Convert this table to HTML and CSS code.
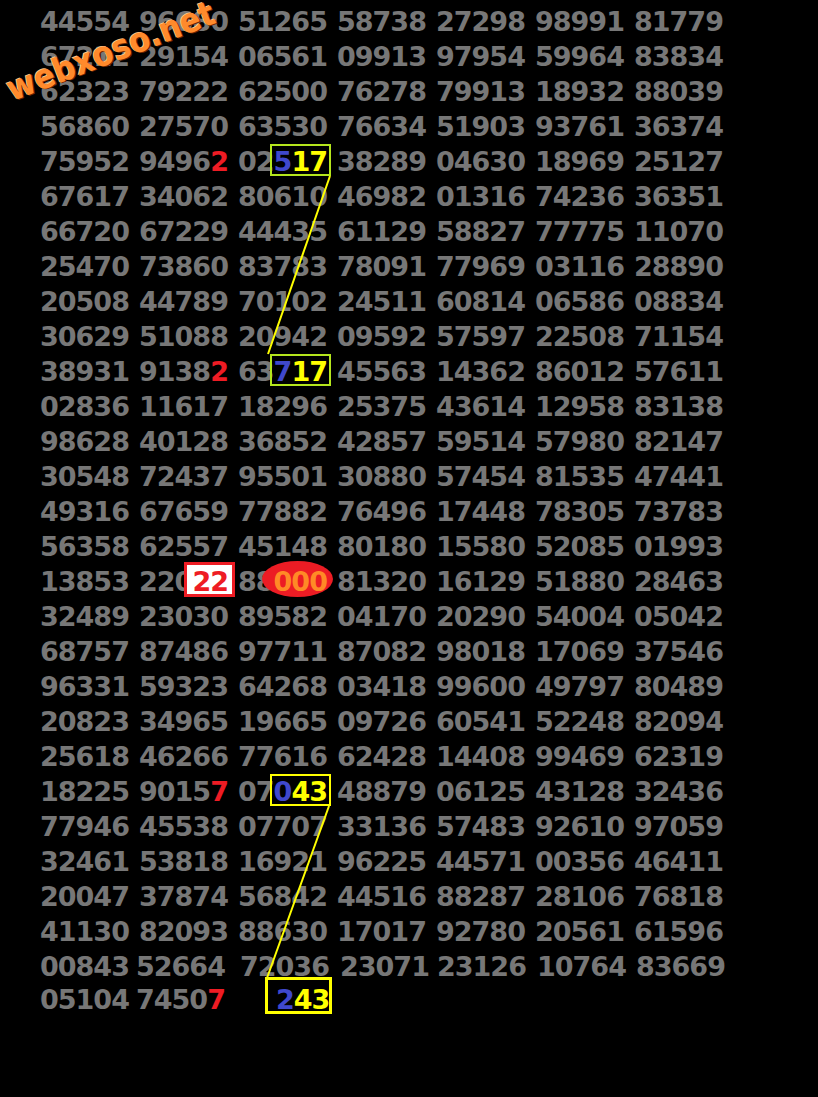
FILE: index.html
```html
<!DOCTYPE html>
<html lang="vi">
<head>
  <meta charset="UTF-8" />
  <meta name="viewport" content="width=device-width, initial-scale=1.0"/>
  <title>Cầu lô</title>
  <link rel="stylesheet" href="styles.css">
</head>
<body>
  <div class="board">
    <div class="row"><span>44554</span><span>96680</span><span>51265</span><span>58738</span><span>27298</span><span>98991</span><span>81779</span></div>
    <div class="row"><span>67212</span><span>29154</span><span>06561</span><span>09913</span><span>97954</span><span>59964</span><span>83834</span></div>
    <div class="row"><span>62323</span><span>79222</span><span>62500</span><span>76278</span><span>79913</span><span>18932</span><span>88039</span></div>
    <div class="row"><span>56860</span><span>27570</span><span>63530</span><span>76634</span><span>51903</span><span>93761</span><span>36374</span></div>
    <div class="row"><span>75952</span><span>9496<b class="red">2</b></span><span>02<b class="box lime"><i class="blue">5</i><i class="yellow">17</i></b></span><span>38289</span><span>04630</span><span>18969</span><span>25127</span></div>
    <div class="row"><span>67617</span><span>34062</span><span>80610</span><span>46982</span><span>01316</span><span>74236</span><span>36351</span></div>
    <div class="row"><span>66720</span><span>67229</span><span>44435</span><span>61129</span><span>58827</span><span>77775</span><span>11070</span></div>
    <div class="row"><span>25470</span><span>73860</span><span>83783</span><span>78091</span><span>77969</span><span>03116</span><span>28890</span></div>
    <div class="row"><span>20508</span><span>44789</span><span>70102</span><span>24511</span><span>60814</span><span>06586</span><span>08834</span></div>
    <div class="row"><span>30629</span><span>51088</span><span>20942</span><span>09592</span><span>57597</span><span>22508</span><span>71154</span></div>
    <div class="row"><span>38931</span><span>9138<b class="red">2</b></span><span>63<b class="box lime"><i class="blue">7</i><i class="yellow">17</i></b></span><span>45563</span><span>14362</span><span>86012</span><span>57611</span></div>
    <div class="row"><span>02836</span><span>11617</span><span>18296</span><span>25375</span><span>43614</span><span>12958</span><span>83138</span></div>
    <div class="row"><span>98628</span><span>40128</span><span>36852</span><span>42857</span><span>59514</span><span>57980</span><span>82147</span></div>
    <div class="row"><span>30548</span><span>72437</span><span>95501</span><span>30880</span><span>57454</span><span>81535</span><span>47441</span></div>
    <div class="row"><span>49316</span><span>67659</span><span>77882</span><span>76496</span><span>17448</span><span>78305</span><span>73783</span></div>
    <div class="row"><span>56358</span><span>62557</span><span>45148</span><span>80180</span><span>15580</span><span>52085</span><span>01993</span></div>
    <div class="row"><span>13853</span><span>220<b class="pair">22</b></span><span>88<b class="oval">000</b></span><span>81320</span><span>16129</span><span>51880</span><span>28463</span></div>
    <div class="row"><span>32489</span><span>23030</span><span>89582</span><span>04170</span><span>20290</span><span>54004</span><span>05042</span></div>
    <div class="row"><span>68757</span><span>87486</span><span>97711</span><span>87082</span><span>98018</span><span>17069</span><span>37546</span></div>
    <div class="row"><span>96331</span><span>59323</span><span>64268</span><span>03418</span><span>99600</span><span>49797</span><span>80489</span></div>
    <div class="row"><span>20823</span><span>34965</span><span>19665</span><span>09726</span><span>60541</span><span>52248</span><span>82094</span></div>
    <div class="row"><span>25618</span><span>46266</span><span>77616</span><span>62428</span><span>14408</span><span>99469</span><span>62319</span></div>
    <div class="row"><span>18225</span><span>9015<b class="red">7</b></span><span>07<b class="box gold"><i class="blue">0</i><i class="yellow">43</i></b></span><span>48879</span><span>06125</span><span>43128</span><span>32436</span></div>
    <div class="row"><span>77946</span><span>45538</span><span>07707</span><span>33136</span><span>57483</span><span>92610</span><span>97059</span></div>
    <div class="row"><span>32461</span><span>53818</span><span>16921</span><span>96225</span><span>44571</span><span>00356</span><span>46411</span></div>
    <div class="row"><span>20047</span><span>37874</span><span>56842</span><span>44516</span><span>88287</span><span>28106</span><span>76818</span></div>
    <div class="row"><span>41130</span><span>82093</span><span>88630</span><span>17017</span><span>92780</span><span>20561</span><span>61596</span></div>
    <div class="row loose"><span>00843</span><span>52664</span><span>72036</span><span>23071</span><span>23126</span><span>10764</span><span>83669</span></div>
    <div class="row last"><span>05104</span><span>7450<b class="red">7</b></span><span class="pending"><b class="box gold tall"><i class="blue">2</i><i class="yellow">43</i></b></span></div>
  </div>

  <svg class="links" width="818" height="1097" viewBox="0 0 818 1097">
    <line x1="330" y1="176" x2="268" y2="354" />
    <line x1="329" y1="806" x2="267" y2="978" />
  </svg>

  <div class="logo">webxoso.net</div>
</body>
</html>
```

FILE: styles.css
```css
body {
  background-color: black;
  margin: 0;
  font-family: 'DejaVu Sans', Verdana, sans-serif;
  position: relative;
  height: 1097px;
  overflow: hidden;
}

.board {
  padding: 4px 0 0 40px;
  font-size: 27px;
  font-weight: bold;
  letter-spacing: -1px;
  color: #777777;
}

.row {
  display: grid;
  grid-template-columns: repeat(7, 99px);
  height: 35px;
  line-height: 35px;
  white-space: nowrap;
}

.row.loose {
  grid-template-columns: 96px 104px 100px 97px 100px 99px 99px;
}

.row.last {
  height: 32px;
  line-height: 32px;
  grid-template-columns: 96px 104px 100px;
}

.pending {
  padding-left: 36px;
}

b, i {
  font-style: normal;
  font-weight: bold;
}

.red { color: #ee1c24; }
.blue { color: #3f48cc; }
.yellow { color: #ffff00; }

.box, .pair, .oval {
  position: relative;
  z-index: 0;
}

.box::before, .pair::before, .oval::before {
  content: '';
  position: absolute;
  box-sizing: border-box;
  z-index: -1;
}

.box::before {
  left: -4px;
  right: -4px;
  top: -2px;
  height: 32px;
  border: 2px solid #ffff00;
}

.box.lime::before {
  border-color: #b5e61d;
}

.box.tall::before {
  left: -11px;
  right: -3px;
  top: -7px;
  height: 37px;
  border-width: 3px;
}

.pair {
  color: #ee1c24;
}

.pair::before {
  left: -8px;
  right: -7px;
  top: -4px;
  height: 35px;
  background: white;
  border: 3px solid #ee1c24;
}

.oval {
  color: #ff8a26;
}

.oval::before {
  left: -12px;
  right: -6px;
  top: -5px;
  height: 36px;
  background: #ec1c24;
  border-radius: 50%;
}

.links {
  position: absolute;
  left: 0;
  top: 0;
  pointer-events: none;
}

.links line {
  stroke: #ffff00;
  stroke-width: 2;
}

.logo {
  position: absolute;
  left: 14px;
  top: 72px;
  font-family: 'DejaVu Sans', sans-serif;
  font-size: 34px;
  line-height: 1;
  font-weight: bold;
  color: #ff8a2c;
  text-shadow: 1px 1px 0 #6a2800, -1px -1px 0 #ffc48a;
  transform: rotate(-21deg) scaleX(0.9);
  transform-origin: left bottom;
}
```
